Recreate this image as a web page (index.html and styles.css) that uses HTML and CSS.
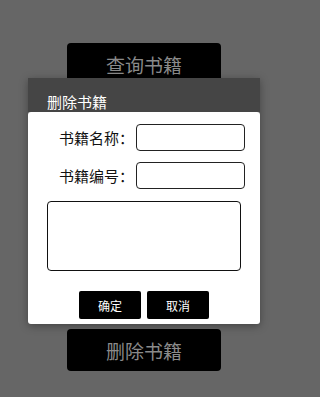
FILE: index.html
```html
<!DOCTYPE html>
<html lang="zh">
<head>
<meta charset="utf-8">
<link rel="stylesheet" href="styles.css">
</head>
<body>
<div class="page">
  <button class="menu-btn">查询书籍</button>
  <button class="menu-btn">删除书籍</button>
</div>
<div class="dialog">
  <div class="dialog-title">删除书籍</div>
  <div class="dialog-body">
    <div class="field">
      <span class="label">书籍名称：</span>
      <input class="input" type="text">
    </div>
    <div class="field">
      <span class="label">书籍编号：</span>
      <input class="input" type="text">
    </div>
    <textarea class="result"></textarea>
    <div class="actions">
      <button class="act-btn">确定</button>
      <button class="act-btn">取消</button>
    </div>
  </div>
</div>
</body>
</html>
```
FILE: styles.css
```css
html, body {
  margin: 0;
  padding: 0;
}
body {
  width: 291px;
  height: 397px;
  background: #666666;
  font-family: "Noto Sans CJK SC", "Noto Sans", sans-serif;
  position: relative;
  overflow: hidden;
}
.page {
  display: flex;
  flex-direction: column;
  align-items: center;
  gap: 244px;
  padding-top: 43px;
  padding-right: 3px;
}
.menu-btn {
  width: 154px;
  height: 42px;
  background: #000;
  border: none;
  border-radius: 4px;
  color: #8a8a8a;
  font-family: inherit;
  font-size: 19px;
  line-height: 1;
  padding: 0;
}
.dialog {
  position: absolute;
  left: 28px;
  top: 78px;
  width: 232px;
  box-shadow: 0 2px 8px rgba(0,0,0,0.35);
  border-radius: 0 0 3px 3px;
}
.dialog-title {
  height: 34px;
  background: #454545;
  color: #fff;
  font-size: 15px;
  line-height: 15px;
  box-sizing: border-box;
  padding: 16px 0 0 19px;
}
.dialog-body {
  background: #fff;
  border-radius: 3px;
  padding: 12px 15px 5px 19px;
  display: flex;
  flex-direction: column;
}
.field {
  display: flex;
  align-items: center;
  justify-content: flex-end;
  gap: 2px;
  margin-bottom: 11px;
}
.label {
  font-size: 15px;
  color: #111;
  line-height: 15px;
}
.input {
  width: 109px;
  height: 27px;
  box-sizing: border-box;
  border: 1px solid #222;
  border-radius: 4px;
  margin: 0;
  padding: 0;
  background: #fff;
}
.result {
  width: 194px;
  height: 70px;
  box-sizing: border-box;
  border: 1px solid #111;
  border-radius: 4px;
  margin: 1px 0 0 0;
  padding: 0;
  resize: none;
  display: block;
}
.actions {
  display: flex;
  justify-content: center;
  gap: 6px;
  margin-top: 20px;
  margin-left: -4px;
}
.act-btn {
  width: 62px;
  height: 28px;
  background: #000;
  border: none;
  border-radius: 2px;
  color: #fff;
  font-family: inherit;
  font-size: 12px;
  padding: 0;
}
```
